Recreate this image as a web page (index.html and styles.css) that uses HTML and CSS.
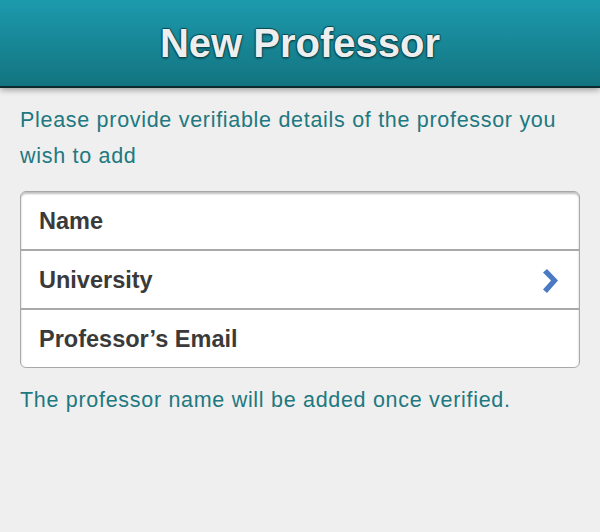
FILE: index.html
```html
<!DOCTYPE html>
<html>
<head>
<meta charset="utf-8">
<link rel="stylesheet" href="styles.css">
</head>
<body>
<header class="bar">
  <h1 class="title">New Professor</h1>
</header>
<main class="content">
  <p class="intro">Please provide verifiable details of the professor you wish to add</p>
  <div class="card">
    <div class="row"><span class="label">Name</span></div>
    <div class="row"><span class="label">University</span>
      <svg class="chev" width="18" height="26" viewBox="0 0 18 26"><path d="M2 4.5 L6 1 L17 12.5 L6 25 L2 21.5 L10 12.5 Z" fill="#4b7ac4"/></svg>
    </div>
    <div class="row"><span class="label">Professor’s Email</span></div>
  </div>
  <p class="note">The professor name will be added once verified.</p>
</main>
</body>
</html>
```
FILE: styles.css
```css
html, body { margin: 0; padding: 0; }
body {
  background: #efefef;
  width: 600px;
  height: 532px;
  overflow: hidden;
  font-family: "Liberation Sans", Arial, sans-serif;
}
.bar {
  height: 86px;
  background: linear-gradient(#1c9aad, #137480);
  border-bottom: 2px solid #0a2a2e;
  box-shadow: 0 2px 6px rgba(0,0,0,0.35);
  display: flex;
  align-items: center;
  justify-content: center;
  position: relative;
}
.title {
  margin: 0;
  font-size: 40px;
  font-weight: bold;
  color: #eeeeee;
  text-shadow: 0 -1px 1px #0a4a52, 0 1px 1px #0a4a52, 1px 0 1px #0a4a52, -1px 0 1px #0a4a52, 0 2px 2px rgba(0,0,0,0.3);
}
.content {
  padding: 0 20px;
}
.intro {
  margin: 14px 0 0;
  font-size: 21.5px;
  letter-spacing: 0.7px;
  line-height: 36px;
  color: #217880;
}
.card {
  margin-top: 17px;
  background: #fff;
  border: 1px solid #a8a8a8;
  border-radius: 6px;
  box-shadow: inset 0 2px 2px rgba(0,0,0,0.25);
  overflow: hidden;
}
.row {
  height: 57px;
  display: flex;
  align-items: center;
  justify-content: space-between;
  padding: 2px 20px 0 18px;
  box-sizing: border-box;
}
.row + .row { border-top: 2px solid #a9a9a9; height: 59px; }
.label {
  font-size: 23.5px;
  font-weight: bold;
  color: #3a3a3a;
}
.chev { display: block; }
.note {
  margin: 14px 0 0;
  font-size: 21.5px;
  letter-spacing: 0.7px;
  line-height: 36px;
  color: #217880;
}
```
